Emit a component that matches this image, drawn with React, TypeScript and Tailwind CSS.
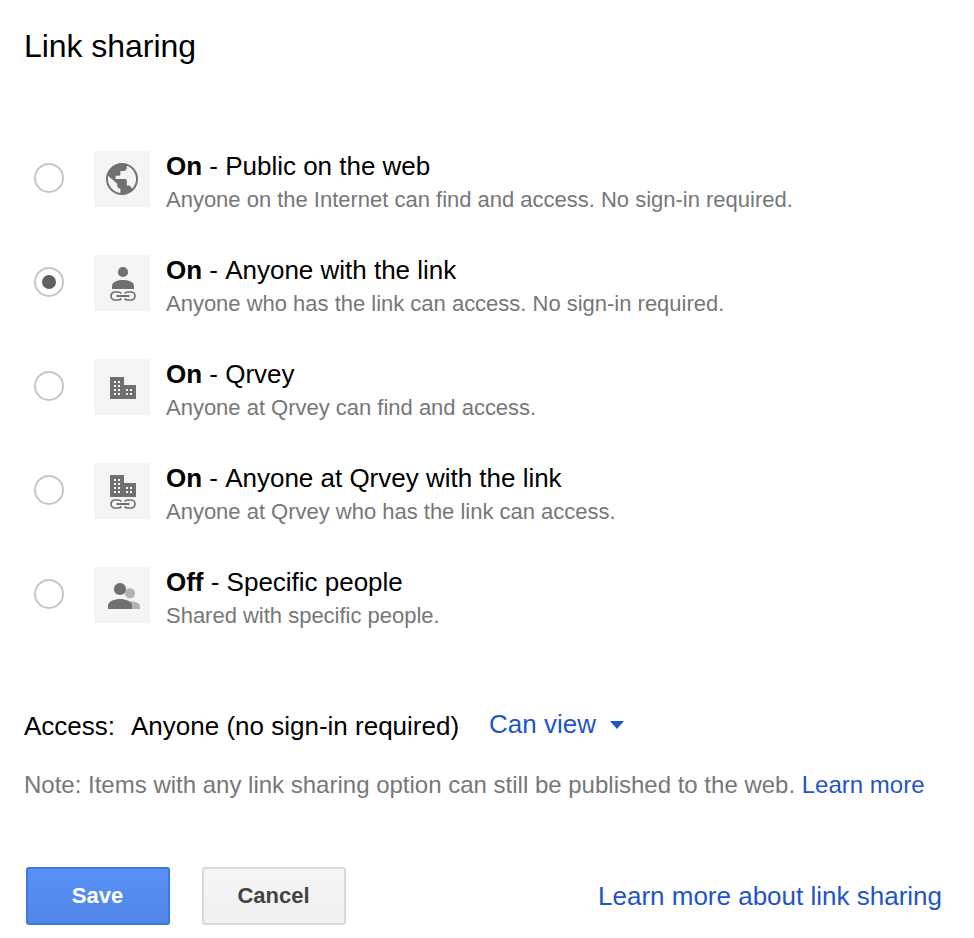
import { useState, type ReactNode } from "react";

const LinkGlyph = ({ y }: { y: number }) => (
  <g transform={`translate(16 ${y})`} fill="none" stroke="#707070">
    <path
      d="M11.4 2.5C10.6 1.4 9.6 1 8.2 1H5a4 4 0 0 0 0 8h3.2c1.4 0 2.4-.4 3.2-1.5M14.6 2.5C15.4 1.4 16.4 1 17.8 1H21a4 4 0 0 1 0 8h-3.2c-1.4 0-2.4-.4-3.2-1.5"
      strokeWidth="1.7"
    />
    <path d="M6.6 5h12.8" strokeWidth="2" />
  </g>
);

const Buildings = ({ y }: { y: number }) => (
  <g transform={`translate(16 ${y})`}>
    <path d="M0 0h14v8h12v14H0z" fill="#707070" />
    <path
      d="M4 4h2v2H4zM8 4h2v2H8zM4 8h2v2H4zM8 8h2v2H8zM4 12h2v2H4zM8 12h2v2H8zM4 16h2v2H4zM8 16h2v2H8zM16 12h2v2h-2zM20 12h2v2h-2zM16 16h2v2h-2zM20 16h2v2h-2z"
      fill="#f8f8f8"
    />
  </g>
);

const Globe = () => (
  <g transform="translate(8.8 8.8) scale(1.6)">
    <circle cx="12" cy="12" r="10" fill="#707070" />
    <path
      d="M11 20.7c-4.4-.5-7.8-4.2-7.8-8.7 0-.62.08-1.31.21-1.89L9 15v1c0 1.1.9 2 2 2zm7.2-2.6c-.3-1.3-1.2-2.1-2.2-2.1h-1v-3c0-.55-.45-1-1-1H8v-2h2c.55 0 1-.45 1-1V7h2c1.1 0 2-.9 2-2V3.75c3.4 1.2 5.8 4.5 5.8 8.25 0 2.4-.97 4.5-2.6 6.1z"
      fill="#f4f4f4"
    />
  </g>
);

const Person = () => (
  <>
    <circle cx="29" cy="17" r="5.1" fill="#707070" />
    <path d="M18 34v-3.2c0-3.8 6.2-5.8 11-5.8s11 2 11 5.8V34z" fill="#707070" />
  </>
);

const People = () => (
  <>
    <circle cx="36" cy="26.3" r="5.1" fill="#b2b2b2" />
    <path d="M36 34.2c4.5 0 10 1.4 10 5V42H34z" fill="#b2b2b2" />
    <circle cx="26" cy="22" r="6.1" fill="#707070" />
    <path d="M14 42v-3.4c0-4.6 7-6.6 12-6.6s12 2 12 6.6V42z" fill="#707070" />
  </>
);

type Option = { state: string; label: string; note: string; icon: ReactNode };

const options: Option[] = [
  { state: "On", label: "Public on the web", note: "Anyone on the Internet can find and access. No sign-in required.", icon: <Globe /> },
  { state: "On", label: "Anyone with the link", note: "Anyone who has the link can access. No sign-in required.", icon: <><Person /><LinkGlyph y={36} /></> },
  { state: "On", label: "Qrvey", note: "Anyone at Qrvey can find and access.", icon: <Buildings y={18} /> },
  { state: "On", label: "Anyone at Qrvey with the link", note: "Anyone at Qrvey who has the link can access.", icon: <><Buildings y={12} /><LinkGlyph y={36} /></> },
  { state: "Off", label: "Specific people", note: "Shared with specific people.", icon: <People /> },
];

export default function App() {
  const [selected, setSelected] = useState(1);
  return (
    <main className="h-[938px] w-[974px] overflow-hidden bg-white px-6 pt-7 font-['Liberation_Sans',Arial,sans-serif] text-black">
      <h1 className="h-9 text-[32px] leading-9 tracking-[-0.05px] whitespace-nowrap">Link sharing</h1>
      <div className="mt-[87px] flex flex-col gap-12" role="radiogroup">
        {options.map((o, i) => (
          <div key={i} role="radio" aria-checked={selected === i} onClick={() => setSelected(i)} className="flex h-14 cursor-pointer">
            <span className="mt-3 ml-[10px] flex size-[30px] shrink-0 items-center justify-center rounded-full border-2 border-[#c6c6c6]">
              {selected === i && <span className="size-[14px] rounded-full bg-[#606060]" />}
            </span>
            <svg className="ml-[30px] size-14 shrink-0 bg-[#f4f4f4]" viewBox="0 0 56 56">{o.icon}</svg>
            <div className="ml-4 whitespace-nowrap">
              <div className="h-[30px] text-[26px] leading-[30px] tracking-[-0.01px] [font-kerning:none]"><b>{o.state}</b> - {o.label}</div>
              <div className="mt-[5px] h-[28px] text-[22px] leading-[28px] tracking-[-0.01px] text-[#777]">{o.note}</div>
            </div>
          </div>
        ))}
      </div>
      <div className="mt-[86px] flex h-8 text-[26px] leading-8 whitespace-nowrap">
        <span className="w-[107px] pt-px">Access:</span>
        <span className="w-[358px] pt-px">Anyone (no sign-in required)</span>
        <button className="-mt-px flex h-8 items-center text-[#1f55c8]">
          Can view
          <svg className="mt-px ml-[14px] h-2 w-[14px]" viewBox="0 0 14 8"><path d="M0 0h14L7 8z" fill="#1f55c8" /></svg>
        </button>
      </div>
      <p className="mt-[29px] h-[30px] text-[24px] leading-[30px] whitespace-nowrap text-[#777]">
        Note: Items with any link sharing option can still be published to the web. <a className="text-[#1f55c8]">Learn more</a>
      </p>
      <footer className="mt-[67px] ml-0.5 flex h-[58px] items-center whitespace-nowrap">
        <button className="h-[58px] w-36 rounded-[3px] border-2 border-[#3b78e7] bg-linear-to-b from-[#5890f7] to-[#5087e5] pr-px pb-0.5 text-[22px] font-bold text-white">Save</button>
        <button className="ml-8 h-[58px] w-36 rounded-[3px] border-2 border-[#dadada] bg-linear-to-b from-[#f5f5f5] to-[#f0f0f0] pr-px pb-0.5 text-[22px] font-bold text-[#444]">Cancel</button>
        <a className="mr-2 ml-auto text-[26px] text-[#1f55c8]">Learn more about link sharing</a>
      </footer>
    </main>
  );
}
